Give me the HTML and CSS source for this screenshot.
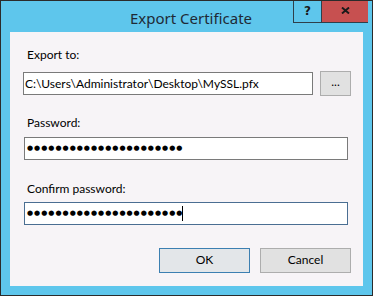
FILE: index.html
```html
<!DOCTYPE html>
<html>
<head>
    <meta charset="utf-8"/>
    <title>Export Certificate</title>
    <link rel="stylesheet" href="styles.css">
</head>
<body>
<div class="window">
    <div class="titlebar">
        <div class="title">Export Certificate</div>
        <div class="controls">
            <div class="btnHelp">?</div>
            <div class="btnClose">
                <svg width="9" height="7" viewBox="0 0 9 7">
                    <path d="M1 0.5 L8 6.5 M8 0.5 L1 6.5" stroke="#1a1a1a" stroke-width="1.9" fill="none"/>
                </svg>
            </div>
        </div>
    </div>
    <div class="client">
        <div class="label">Export to:</div>
        <div class="pathRow">
            <div class="field path">C:\Users\Administrator\Desktop\MySSL.pfx</div>
            <div class="button browse">...</div>
        </div>
        <div class="label pwdLabel">Password:</div>
        <div class="field pwd"><span class="dots">&#9679;&#9679;&#9679;&#9679;&#9679;&#9679;&#9679;&#9679;&#9679;&#9679;&#9679;&#9679;&#9679;&#9679;&#9679;&#9679;&#9679;&#9679;&#9679;&#9679;&#9679;&#9679;</span></div>
        <div class="label confirmLabel">Confirm password:</div>
        <div class="field pwd focus"><span class="dots">&#9679;&#9679;&#9679;&#9679;&#9679;&#9679;&#9679;&#9679;&#9679;&#9679;&#9679;&#9679;&#9679;&#9679;&#9679;&#9679;&#9679;&#9679;&#9679;&#9679;&#9679;&#9679;</span><span class="caret"></span></div>
        <div class="actions">
            <div class="button default">OK</div>
            <div class="button">Cancel</div>
        </div>
    </div>
</div>
</body>
</html>
```

FILE: styles.css
```css
* {
    margin: 0;
    padding: 0;
    box-sizing: border-box;
}
body {
    font: 12px/15px Lato, "Noto Sans", Arial, sans-serif;
    color: #000;
    background: #2b2b2b;
}
.window {
    width: 373px;
    height: 296px;
    border: 1px solid #2b2b2b;
    background: #5ec6ec;
    display: flex;
    flex-direction: column;
}
.titlebar {
    height: 31px;
    display: grid;
    grid-template-columns: 1fr auto 1fr;
}
.title {
    grid-column: 2;
    padding: 7px 0 0 9px;
    font: 15px/20px "Noto Sans", sans-serif;
    color: #1f2a36;
}
.controls {
    grid-column: 3;
    justify-self: end;
    display: flex;
    height: 22px;
    margin-right: 4px;
}
.btnHelp {
    width: 28px;
    height: 22px;
    border: 1px solid #2f3f4a;
    border-top: 0;
    border-right: 0;
    text-align: center;
    font: bold 12px/21px "DejaVu Sans", sans-serif;
    color: #1a1a1a;
}
.btnClose {
    width: 47px;
    height: 22px;
    background: #c75050;
    border-bottom: 1px solid #2f3f4a;
    border-left: 1px solid #2f3f4a;
    display: flex;
    align-items: center;
    justify-content: center;
    padding-bottom: 2px;
}
.client {
    flex: 1;
    margin: 0 9px 9px;
    background: #f7f4f7;
    padding: 15px 12px 0 13px;
    display: flex;
    flex-direction: column;
}
.label {
    padding-left: 4px;
    margin-bottom: 9px;
}
.pathRow {
    display: flex;
    align-items: center;
    gap: 7px;
    margin-bottom: 19px;
}
.field {
    height: 23px;
    border: 1px solid #7a7a7a;
    background: #fff;
    line-height: 21px;
    padding-left: 1px;
    white-space: nowrap;
    overflow: hidden;
}
.path {
    flex: 1;
}
.pwdLabel {
    margin-bottom: 7px;
}
.pwd {
    margin: 0 3px 21px 1px;
    padding-left: 2px;
    display: flex;
    align-items: center;
}
.pwd.focus {
    border-color: #4a6e92;
    margin-bottom: 23px;
}
.confirmLabel {
    margin-bottom: 6px;
}
.dots {
    font: 7px/1 "DejaVu Sans", sans-serif;
    letter-spacing: 1px;
}
.caret {
    width: 1px;
    height: 15px;
    background: #000;
    margin-left: -1px;
}
.button {
    width: 91px;
    height: 25px;
    border: 1px solid #adadad;
    background: #e1e1e1;
    text-align: center;
    line-height: 22px;
}
.browse {
    width: 31px;
    line-height: 20px;
}
.actions {
    display: flex;
    justify-content: flex-end;
    gap: 10px;
}
.default {
    border-color: #3c7fb1;
    background: #e3e6e9;
}
```
